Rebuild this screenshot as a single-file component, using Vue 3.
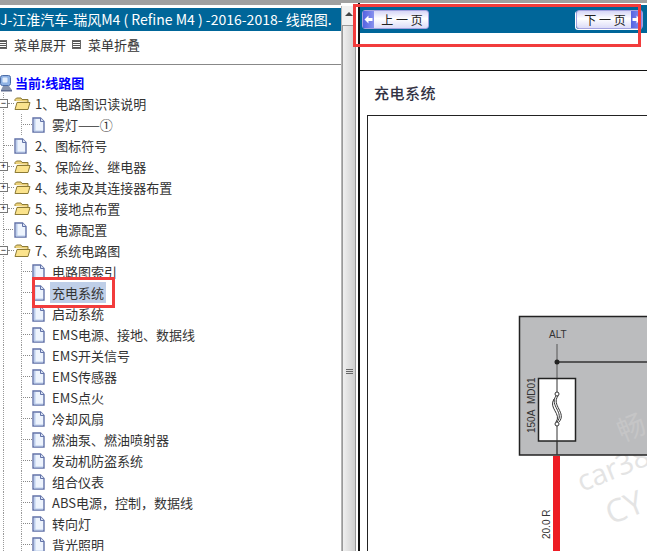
<template>
  <div class="page">
    <div class="left">
      <div class="title">J-江淮汽车-瑞风M4 ( Refine M4 ) -2016-2018- 线路图.</div>
      <div class="menu">
        <span class="menu-icon"></span><span class="menu-text">菜单展开</span>
        <span class="menu-icon"></span><span class="menu-text">菜单折叠</span>
      </div>
      <div class="tree">
        <div class="root">
          <svg class="root-icon" width="15" height="18" viewBox="0 0 15 18">
            <rect x="1.5" y="1.5" width="10" height="10" rx="2" fill="#8fb2e4" stroke="#4d6ea8" />
            <rect x="3.5" y="3.5" width="5" height="5" rx="1" fill="#e2edfb" />
            <path d="M4 12h6l3 4H2z" fill="#8894ad" />
            <path d="M2 16h11v1.5H2z" fill="#5e6c8f" />
          </svg>
          <span>当前:线路图</span>
        </div>
        <div
          v-for="item in items"
          :key="item.label"
          class="row"
          :class="{ child: item.child }"
        >
          <span v-if="item.child" class="dots"></span>
          <span v-else class="toggle-wrap">
            <span v-if="item.folder" class="toggle">{{ item.open ? '−' : '+' }}</span>
            <span class="dots" :class="item.folder ? 'tiny' : 'short'"></span>
          </span>
          <svg v-if="item.folder" class="icon folder" width="17" height="15" viewBox="0 0 17 15">
            <path d="M1 5V3.5L2.5 2H7l1 1.5h6V6" fill="#edd27a" stroke="#8c7a35" />
            <path d="M1 13.5 3 6.5h13l-2 7z" fill="#fbe38c" stroke="#8c7a35" />
          </svg>
          <svg v-else class="icon doc-icon" width="13" height="16" viewBox="0 0 13 16">
            <path d="M1 1h7.5L12 4.5V15H1z" fill="#eef4fd" stroke="#6272a8" stroke-width="1.4" />
            <path d="M2 2h1.5v11.5H11V14.5H2z" fill="#bccdec" />
            <path d="M8.5 1v3.5H12" fill="#dce5f5" stroke="#6272a8" />
          </svg>
          <span class="label" :class="{ selected: item.selected }">{{ item.label }}</span>
        </div>
      </div>
      <div class="mark tree-mark"></div>
    </div>

    <div class="scrollbar">
      <div class="arrow"></div>
      <div class="thumb">
        <span></span><span></span><span></span>
      </div>
    </div>

    <div class="right">
      <div class="nav">
        <div class="nav-btn">
          <span class="nav-cap">
            <svg width="9" height="9" viewBox="0 0 9 9"><path d="M0.5 4.5 4.5 0.5v2.5h4v3h-4v2.500z" fill="#fff" /></svg>
          </span>
          <span class="nav-text">上 一 页</span>
        </div>
        <div class="nav-btn next">
          <span class="nav-text">下 一 页</span>
          <span class="nav-cap">
            <svg width="9" height="9" viewBox="0 0 9 9"><path d="M8.500 4.500 4.500 0.500v2.500h-4v3h4v2.500z" fill="#fff" /></svg>
          </span>
        </div>
      </div>
      <div class="spacer"></div>
      <div class="doc">
        <h1 class="doc-title">充电系统</h1>
        <div class="sheet">
          <svg class="diagram" width="279" height="436" viewBox="0 0 279 436">
            <text transform="translate(214 376) rotate(-22)" class="wm-text" font-size="29">car38</text>
            <text transform="translate(243 409) rotate(-22)" class="wm-text" font-size="32">CY</text>
            <rect x="151.500" y="200.500" width="140" height="138.500" fill="#bbbcbe" stroke="#222" stroke-width="1.500" />
            <text transform="translate(254 326) rotate(-22)" class="wm-han" font-size="28">畅</text>
            <path d="M189 228V339" stroke="#555" stroke-width="1" fill="none" />
            <path d="M189 246H290" stroke="#333" stroke-width="1.500" fill="none" />
            <circle cx="189" cy="246" r="2.500" fill="#222" />
            <rect x="170.500" y="262.500" width="37" height="62.500" fill="#fff" stroke="#222" stroke-width="1.500" />
            <path d="M189 262.500V276M189 310V339" stroke="#333" stroke-width="1" fill="none" />
            <circle cx="189" cy="278" r="2" fill="#fff" stroke="#333" />
            <circle cx="189" cy="308" r="2" fill="#fff" stroke="#333" />
            <path d="M188 280C181 289 197 297 189 306M190 280C183 289 199 297 191 306M186 283C180 292 194 298 188 306" stroke="#333" fill="none" />
            <path d="M188.500 340V436" stroke="#ed1c24" stroke-width="7" fill="none" />
            <text x="181" y="222" class="svg-label" font-size="10">ALT</text>
            <text transform="translate(167 317) rotate(-90)" class="svg-label" font-size="10">150A&nbsp;&nbsp;MD01</text>
            <text transform="translate(182 423) rotate(-90)" class="svg-label" font-size="10">20.0 R</text>
          </svg>
        </div>
      </div>
    </div>

    <div class="mark nav-mark"></div>
  </div>
</template>

<script setup>
const items = [
  { label: "1、电路图识读说明", folder: true, open: true },
  { label: "雾灯——①", child: true },
  { label: "2、图标符号" },
  { label: "3、保险丝、继电器", folder: true },
  { label: "4、线束及其连接器布置", folder: true },
  { label: "5、接地点布置", folder: true },
  { label: "6、电源配置" },
  { label: "7、系统电路图", folder: true, open: true },
  { label: "电路图索引", child: true },
  { label: "充电系统", child: true, selected: true },
  { label: "启动系统", child: true },
  { label: "EMS电源、接地、数据线", child: true },
  { label: "EMS开关信号", child: true },
  { label: "EMS传感器", child: true },
  { label: "EMS点火", child: true },
  { label: "冷却风扇", child: true },
  { label: "燃油泵、燃油喷射器", child: true },
  { label: "发动机防盗系统", child: true },
  { label: "组合仪表", child: true },
  { label: "ABS电源，控制，数据线", child: true },
  { label: "转向灯", child: true },
  { label: "背光照明", child: true }
]
</script>

<style>
html,
body {
  margin: 0;
  overflow: hidden;
  background: #fff;
}
</style>

<style scoped>
.page {
  position: relative;
  display: flex;
  width: 647px;
  height: 551px;
  overflow: hidden;
  background: #fff;
  border-top: 3px solid #a0a0a0;
  box-sizing: border-box;
  font-family: "Noto Sans CJK SC", "Liberation Sans", sans-serif;
  color: #333;
}

.left {
  width: 341px;
  flex-shrink: 0;
  border-top: 2px solid #a0a0a0;
  padding-top: 3px;
  overflow: hidden;
}

.title {
  height: 23px;
  line-height: 23px;
  background: #006699;
  color: #fff;
  font-size: 14px;
  white-space: nowrap;
  overflow: hidden;
}

.menu {
  display: flex;
  align-items: center;
  height: 27px;
  padding-bottom: 6px;
  font-size: 13px;
  border-bottom: 1px solid #888;
}

.menu-icon {
  width: 7px;
  height: 7px;
  border: 1px solid #666;
  background: repeating-linear-gradient(#555 0 1px, #fff 1px 2px);
  background-clip: content-box;
}

.menu-icon:first-child {
  margin-left: -2px;
}

.menu-text {
  margin: 0 6px 0 7px;
}

.tree {
  padding-top: 7px;
  font-size: 13px;
}

.root {
  display: flex;
  align-items: center;
  height: 21px;
  margin-left: -1px;
  color: #0000ff;
  font-weight: 700;
}

.root-icon {
  margin-right: 1px;
}

.row {
  position: relative;
  display: flex;
  align-items: center;
  height: 21px;
  background-image: linear-gradient(#999 50%, transparent 50%);
  background-size: 1px 2px;
  background-repeat: repeat-y;
  background-position: 3px 0;
}

.row.child {
  padding-left: 21px;
}

.row.child::before {
  content: "";
  position: absolute;
  left: 21px;
  top: 0;
  height: 21px;
  border-left: 1px dotted #999;
}

.dots {
  width: 9px;
  border-top: 1px dotted #888;
  margin-left: 2px;
}

.toggle-wrap {
  display: flex;
  align-items: center;
  width: 14px;
  flex-shrink: 0;
}

.dots.short {
  width: 10px;
  margin-left: 3px;
}

.dots.tiny {
  width: 6px;
  margin-left: 0;
}

.toggle {
  width: 7px;
  height: 7px;
  flex-shrink: 0;
  border: 1px solid #777;
  margin-left: -1px;
  background: #fff;
  color: #000;
  font-size: 9px;
  line-height: 7px;
  text-align: center;
  font-family: "Liberation Sans", sans-serif;
}

.icon {
  flex-shrink: 0;
}

.folder {
  margin-right: 2px;
}

.doc-icon {
  margin-right: 5px;
}

.row:not(.child) .doc-icon {
  margin-right: 6px;
}

.label {
  padding: 3px 2px;
  white-space: nowrap;
  line-height: 15px;
}

.label.selected {
  background: #bfcfe8;
}

.scrollbar {
  width: 15px;
  flex-shrink: 0;
  margin-top: 3px;
  overflow: hidden;
  background: #f1f1f1;
  border-left: 1px solid #b5b5b5;
  box-sizing: border-box;
}

.arrow {
  height: 19px;
  position: relative;
}

.arrow::after {
  content: "";
  position: absolute;
  left: 3px;
  top: 6px;
  border: 4px solid transparent;
  border-top: 0;
  border-bottom-color: #444;
}

.thumb {
  height: 692px;
  display: flex;
  flex-direction: column;
  justify-content: center;
  align-items: center;
  gap: 1px;
  border: 1px solid #999;
  box-sizing: border-box;
  background: linear-gradient(90deg, #efefef, #cfcfcf);
}

.thumb span {
  width: 7px;
  height: 1px;
  background: #666;
}

.right {
  flex: 1;
  display: flex;
  flex-direction: column;
  min-width: 0;
  margin-left: 2px;
  border-left: 2px solid #111;
}

.nav {
  display: flex;
  justify-content: space-between;
  align-items: center;
  height: 28px;
  margin-top: 2px;
  padding-left: 2px;
  background: #006699;
  flex-shrink: 0;
}

.nav-btn {
  display: flex;
  align-items: center;
  width: 67px;
  height: 19px;
  background: linear-gradient(#d5d5f6, #fff 45%, #dcdcf8);
  border: 1px solid #a3a3e0;
  border-radius: 3px;
  box-sizing: border-box;
  color: #222;
  font-size: 12px;
}

.nav-cap {
  width: 11px;
  height: 100%;
  display: flex;
  align-items: center;
  justify-content: center;
  background: linear-gradient(90deg, #5563e2, #8791ee);
  flex-shrink: 0;
}

.nav-text {
  flex: 1;
  padding-left: 2px;
  text-align: center;
  white-space: nowrap;
}

.next {
  margin-right: 4px;
  box-shadow: -1px 1px 0 #fff;
}

.spacer {
  height: 37px;
  border-bottom: 1px solid #111;
  flex-shrink: 0;
}

.doc {
  flex: 1;
  min-height: 0;
  padding-left: 7px;
}

.doc-title {
  margin: 0;
  height: 44px;
  padding-left: 7px;
  line-height: 44px;
  font-size: 15px;
  font-weight: 500;
  color: #334;
  letter-spacing: 0.5px;
}

.sheet {
  height: 440px;
  border: 1px solid #222;
  border-right: 0;
  box-sizing: border-box;
}

.diagram {
  display: block;
}

.svg-label {
  fill: #333;
  font-family: "Liberation Sans", sans-serif;
}

.wm-text {
  fill: #e4e4e4;
  font-family: "Open Sans", "Liberation Sans", sans-serif;
}

.wm-han {
  fill: #c5c5c6;
  font-family: "Noto Sans CJK SC", sans-serif;
}

.mark {
  position: absolute;
  border: 3px solid #f23c3c;
  box-sizing: border-box;
  pointer-events: none;
}

.tree-mark {
  left: 32px;
  top: 274px;
  width: 83px;
  height: 31px;
}

.nav-mark {
  left: 353px;
  top: 1px;
  width: 288px;
  height: 43px;
}
</style>
